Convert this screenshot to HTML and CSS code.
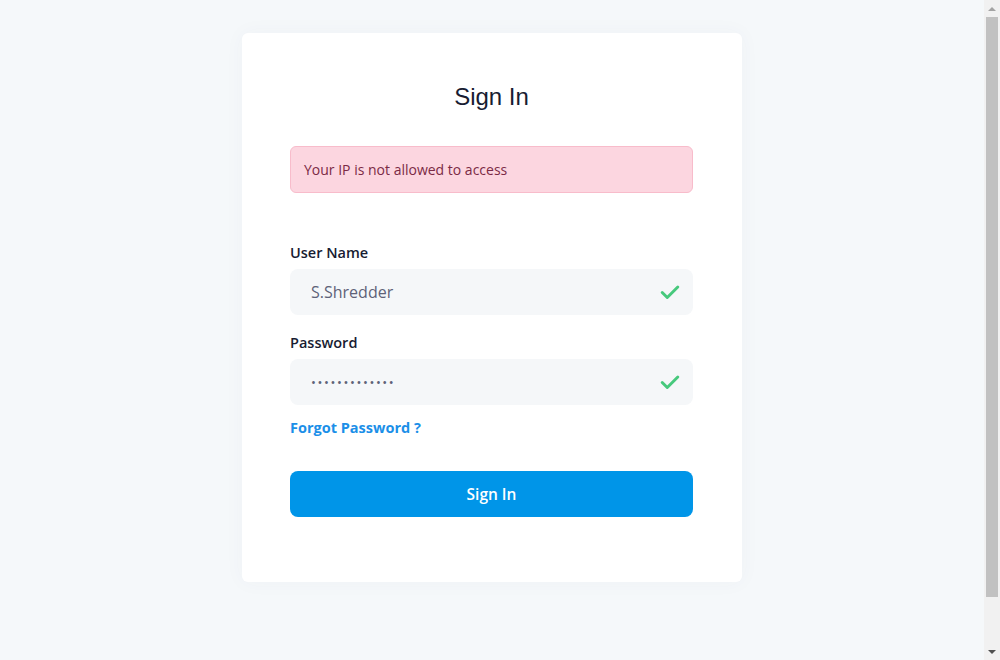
FILE: index.html
```html
<!DOCTYPE html>
<html lang="en">
<head>
<meta charset="utf-8">
<title>Sign In</title>
<link rel="stylesheet" href="styles.css">
</head>
<body>
<div class="page">
  <main class="main">
    <form class="card">
      <h1 class="title">Sign In</h1>
      <div class="alert">Your IP is not allowed to access</div>
      <div class="field field-first">
        <label class="label">User Name</label>
        <div class="input">
          <span class="value">S.Shredder</span>
          <svg class="check" viewBox="0 0 24 24" width="22" height="22"><path d="M3.5 12.5l5.5 5.5L20.5 6.5" fill="none" stroke="#47c97d" stroke-width="3.2" stroke-linecap="round" stroke-linejoin="round"/></svg>
        </div>
      </div>
      <div class="field">
        <label class="label">Password</label>
        <div class="input">
          <span class="value dots">•••••••••••••</span>
          <svg class="check" viewBox="0 0 24 24" width="22" height="22"><path d="M3.5 12.5l5.5 5.5L20.5 6.5" fill="none" stroke="#47c97d" stroke-width="3.2" stroke-linecap="round" stroke-linejoin="round"/></svg>
        </div>
      </div>
      <a class="forgot" href="#">Forgot Password ?</a>
      <button class="btn" type="button">Sign In</button>
    </form>
  </main>
  <div class="scrollbar" aria-hidden="true">
    <div class="sb-btn"><span class="arrow-up"></span></div>
    <div class="sb-thumb"></div>
    <div class="sb-rest"></div>
    <div class="sb-btn"><span class="arrow-down"></span></div>
  </div>
</div>
</body>
</html>
```
FILE: styles.css
```css
html, body {
  margin: 0;
  padding: 0;
  height: 100%;
  overflow: hidden;
}
body {
  background: #f5f8fa;
  font-family: "Open Sans", "Liberation Sans", sans-serif;
}
.page {
  display: flex;
  height: 660px;
}
.main {
  flex: 1;
  display: flex;
  justify-content: center;
  align-items: flex-start;
  padding-top: 33px;
}
.scrollbar {
  width: 16px;
  background: #f1f1f1;
  display: flex;
  flex-direction: column;
}
.sb-btn {
  height: 17px;
  display: flex;
  align-items: center;
  justify-content: center;
}
.arrow-up {
  width: 0;
  height: 0;
  border-left: 4px solid transparent;
  border-right: 4px solid transparent;
  border-bottom: 4px solid #a3a3a3;
}
.arrow-down {
  width: 0;
  height: 0;
  border-left: 4px solid transparent;
  border-right: 4px solid transparent;
  border-top: 4px solid #505050;
}
.sb-thumb {
  height: 580px;
  margin: 0 2px;
  background: #c1c1c1;
}
.sb-rest {
  flex: 1;
}
.card {
  width: 500px;
  box-sizing: border-box;
  background: #fff;
  border-radius: 6px;
  box-shadow: 0 0 20px rgba(76, 87, 125, 0.04);
  padding: 48px 49px 65px 48px;
  display: flex;
  flex-direction: column;
}
.title {
  margin: 0;
  font-family: "Liberation Sans", Arial, sans-serif;
  font-weight: 400;
  font-size: 24px;
  line-height: 32px;
  color: #181c32;
  text-align: center;
}
.alert {
  margin-top: 33px;
  height: 47px;
  box-sizing: border-box;
  background: #fcd6e0;
  border: 1px solid #f8bccb;
  border-radius: 6px;
  color: #7b2a45;
  font-size: 14px;
  display: flex;
  align-items: center;
  padding-left: 13px;
}
.field {
  display: flex;
  flex-direction: column;
}
.field-first {
  margin-top: 50px;
}
.field + .field {
  margin-top: 18px;
}
.label {
  font-size: 14.5px;
  font-weight: 600;
  color: #181c32;
  line-height: 20px;
  margin-bottom: 6px;
}
.input {
  height: 46px;
  background: #f5f7f9;
  border-radius: 8px;
  display: flex;
  align-items: center;
  justify-content: space-between;
  padding: 0 12px 0 21px;
}
.value {
  font-size: 16px;
  color: #5e6278;
}
.dots {
  font-size: 13px;
  letter-spacing: 1.6px;
}
.check {
  display: block;
}
.forgot {
  margin-top: 13px;
  font-size: 14.5px;
  font-weight: 700;
  color: #1b8fe8;
  text-decoration: none;
  line-height: 20px;
  align-self: flex-start;
}
.btn {
  margin-top: 33px;
  height: 46px;
  border: 0;
  border-radius: 8px;
  background: #0095e8;
  color: #fff;
  font-family: "Open Sans", "Liberation Sans", sans-serif;
  font-size: 15.5px;
  font-weight: 600;
}
```
